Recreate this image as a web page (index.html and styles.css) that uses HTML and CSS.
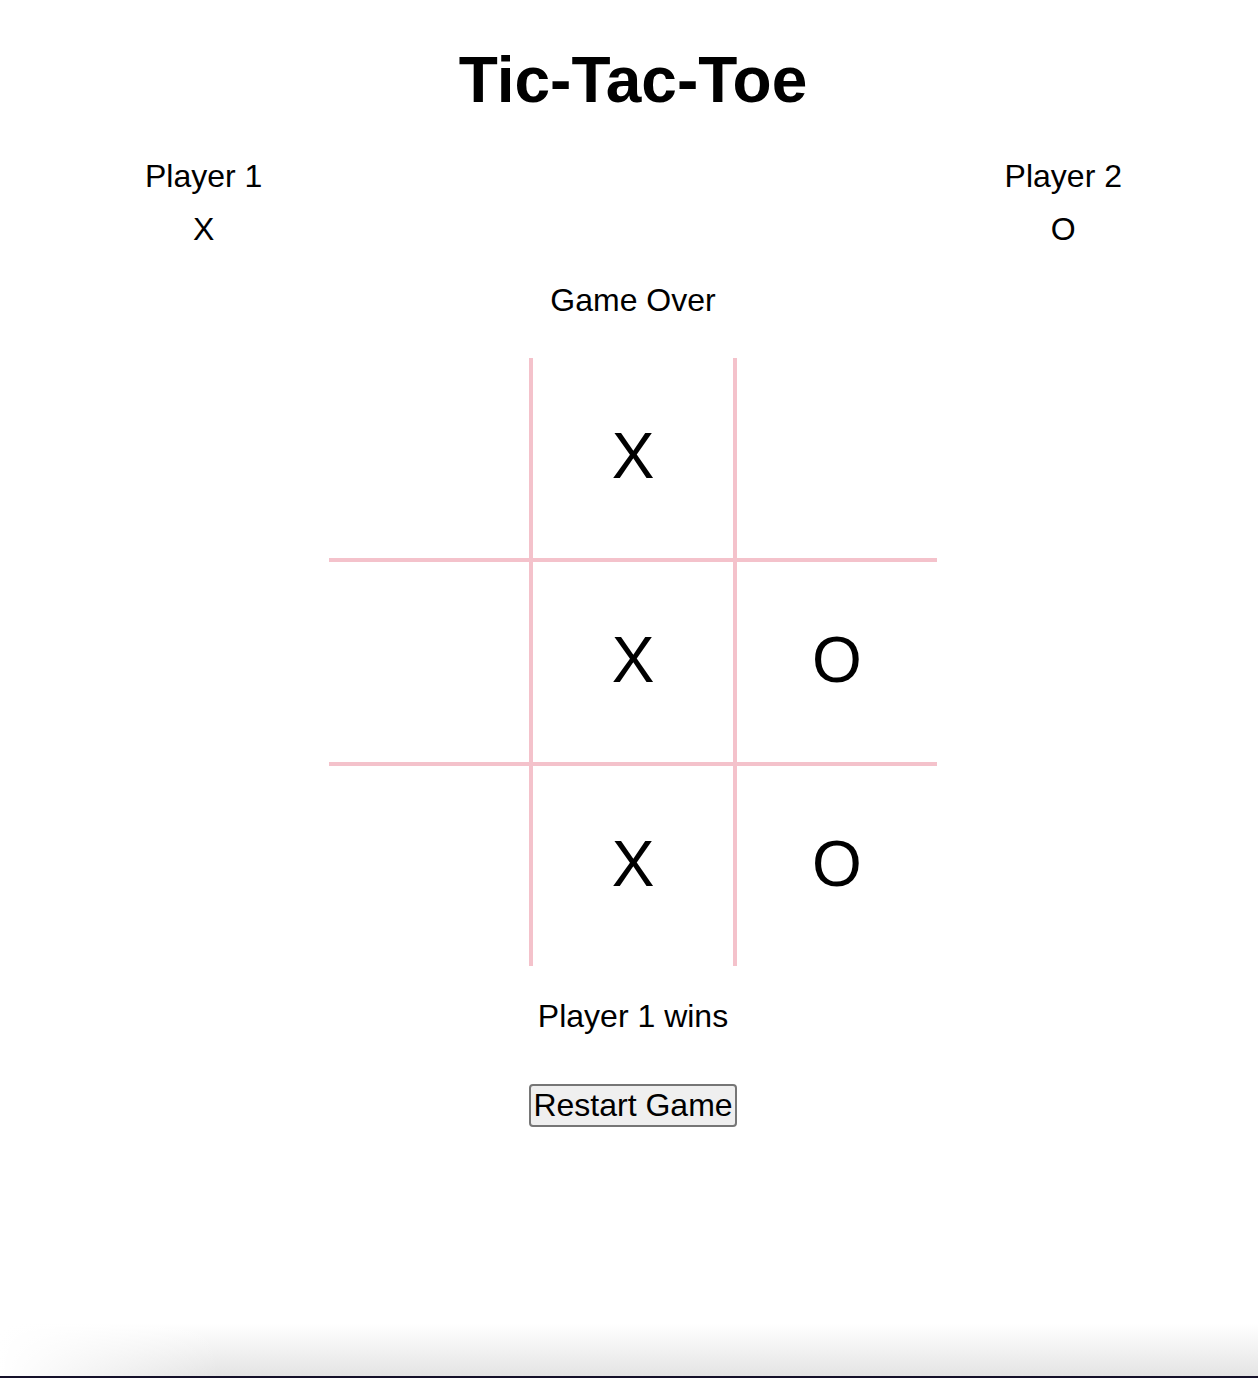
FILE: index.html
```html
<!DOCTYPE html>
<html lang="en">
<head>
<meta charset="utf-8">
<title>Tic-Tac-Toe</title>
<link rel="stylesheet" href="styles.css">
</head>
<body>
  <h1 class="title">Tic-Tac-Toe</h1>
  <div class="players">
    <div class="player">
      <div class="player-name">Player 1</div>
      <div class="player-mark">X</div>
    </div>
    <div class="player">
      <div class="player-name">Player 2</div>
      <div class="player-mark">O</div>
    </div>
  </div>
  <div class="status">Game Over</div>
  <div class="board">
    <div class="cell"></div>
    <div class="cell">X</div>
    <div class="cell"></div>
    <div class="cell"></div>
    <div class="cell">X</div>
    <div class="cell">O</div>
    <div class="cell"></div>
    <div class="cell">X</div>
    <div class="cell">O</div>
  </div>
  <div class="result">Player 1 wins</div>
  <div class="actions">
    <button class="restart" type="button">Restart Game</button>
  </div>
</body>
</html>
```

FILE: styles.css
```css
html {
  min-height: 100%;
  background:
    linear-gradient(to right, #ffffff, rgba(255,255,255,0) 220px) left 0 bottom 2px / 220px 52px no-repeat,
    linear-gradient(to bottom, #ffffff calc(100% - 54px), #e4e4e4 calc(100% - 2px), #15112a calc(100% - 2px));
}

body {
  margin: 0;
  padding-left: 8px;
  font-family: "Liberation Sans", Arial, Helvetica, sans-serif;
  font-size: 32px;
  line-height: 37px;
  color: #000;
  text-align: center;
}

.title {
  margin: 0;
  padding-top: 43px;
  font-size: 64px;
  line-height: 74px;
  font-weight: bold;
}

.players {
  display: flex;
  justify-content: space-between;
  margin-top: 41px;
  padding: 0 136px 0 137px;
}

.player {
  display: flex;
  flex-direction: column;
  align-items: center;
  gap: 16px;
}

.status {
  margin-top: 34px;
}

.board {
  display: grid;
  grid-template-columns: repeat(3, 200px);
  grid-template-rows: repeat(3, 200px);
  gap: 4px;
  width: 608px;
  margin: 39px auto 0;
  background: #f4c2cb;
}

.cell {
  display: flex;
  align-items: center;
  justify-content: center;
  background: #fff;
  font-size: 64px;
  line-height: 64px;
  padding-bottom: 4px;
  box-sizing: border-box;
}

.result {
  margin-top: 32px;
}

.actions {
  margin-top: 49px;
}

.restart {
  font-family: "Liberation Sans", Arial, Helvetica, sans-serif;
  font-size: 32px;
  line-height: 37px;
  color: #000;
  background: #efefef;
  border: 2px solid #767676;
  border-radius: 4px;
  padding: 1px 2px 1px;
  margin: 0;
}
```
